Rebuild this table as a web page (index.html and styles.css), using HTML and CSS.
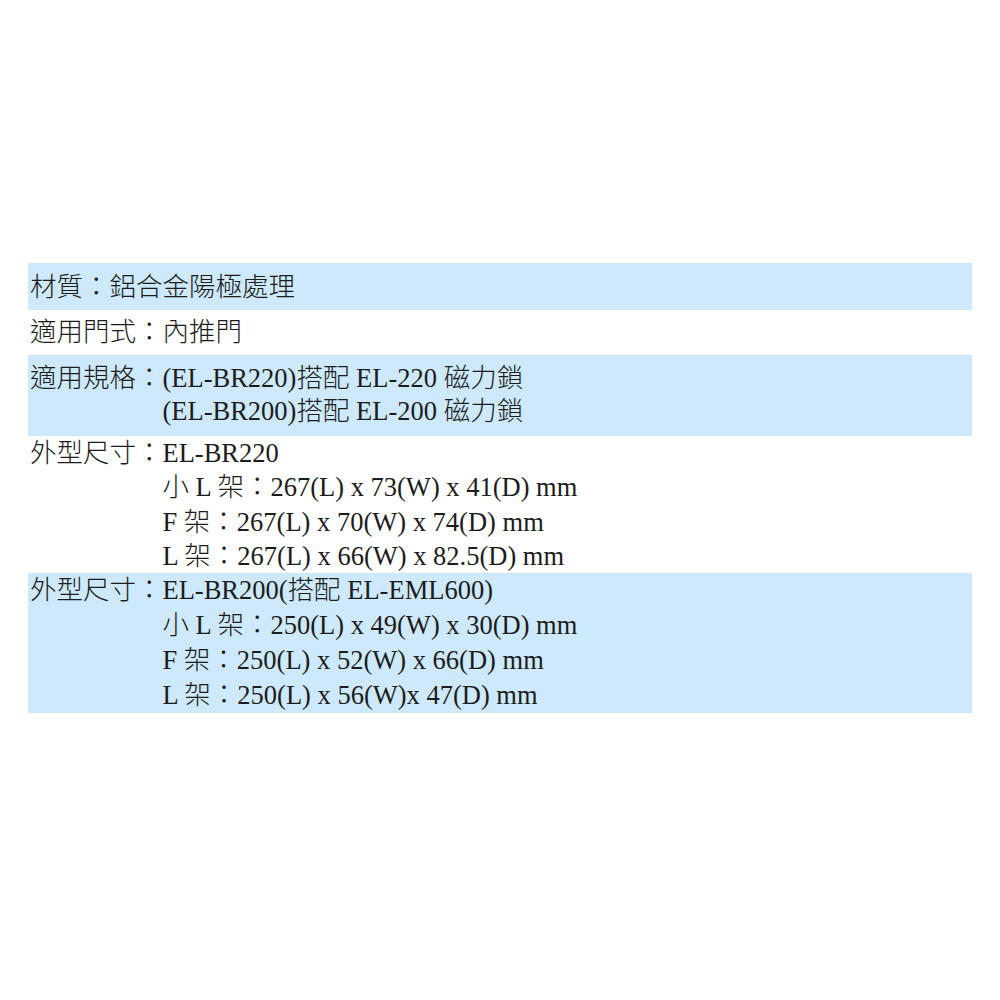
FILE: index.html
```html
<!DOCTYPE html>
<html lang="zh-Hant">
<head>
<meta charset="utf-8">
<link rel="stylesheet" href="styles.css">
</head>
<body>
<div class="page">
  <div class="spec">
    <div class="row blue r1"><span class="label">材質：</span><span>鋁合金陽極處理</span></div>
    <div class="row r2"><span class="label">適用門式：</span><span>內推門</span></div>
    <div class="row blue r3">
      <div class="label">適用規格：</div>
      <div class="lines">
        <div>(EL-BR220)搭配 EL-220 磁力鎖</div>
        <div>(EL-BR200)搭配 EL-200 磁力鎖</div>
      </div>
    </div>
    <div class="row r4">
      <div class="label">外型尺寸：</div>
      <div class="lines">
        <div>EL-BR220</div>
        <div>小 L 架：267(L) x 73(W) x 41(D) mm</div>
        <div>F 架：267(L) x 70(W) x 74(D) mm</div>
        <div>L 架：267(L) x 66(W) x 82.5(D) mm</div>
      </div>
    </div>
    <div class="row blue r5">
      <div class="label">外型尺寸：</div>
      <div class="lines">
        <div>EL-BR200(搭配 EL-EML600)</div>
        <div>小 L 架：250(L) x 49(W) x 30(D) mm</div>
        <div>F 架：250(L) x 52(W) x 66(D) mm</div>
        <div>L 架：250(L) x 56(W)x 47(D) mm</div>
      </div>
    </div>
  </div>
</div>
</body>
</html>
```
FILE: styles.css
```css
html, body {
  margin: 0;
  padding: 0;
  background: #ffffff;
}
.page {
  padding: 263px 28px 0 28px;
}
.spec {
  width: 944px;
  font-family: "Liberation Serif", "Noto Sans CJK TC", serif;
  font-size: 26.5px;
  font-weight: 300;
  line-height: 34px;
  color: #1c1c1c;
}
.row {
  display: flex;
  padding-left: 2px;
  white-space: nowrap;
}
.blue {
  background: #cde9fb;
}
.label {
  flex: none;
}
.lines {
  display: flex;
  flex-direction: column;
}
.r1 { padding-top: 7px; padding-bottom: 6px; }
.r2 { padding-top: 5px; padding-bottom: 6px; }
.r3 { padding-top: 7px; padding-bottom: 8px; line-height: 33px; }
.r4 { line-height: 34.25px; padding-top: 0; }
.r5 { line-height: 35px; }
```
